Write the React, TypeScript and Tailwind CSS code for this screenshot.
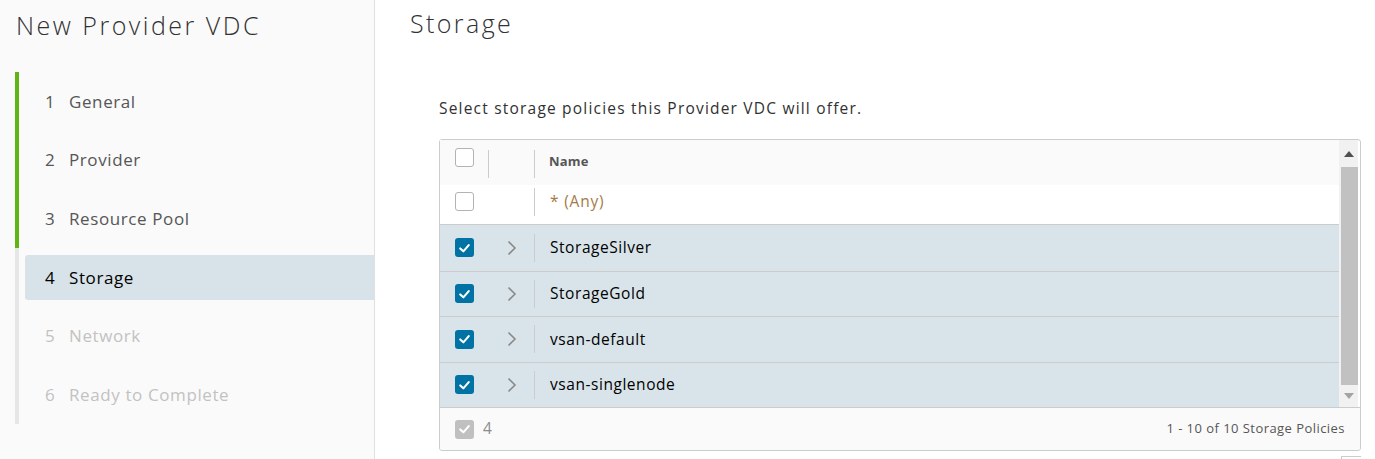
import React from "react";

const steps = [
  { n: 1, label: "General", state: "done" },
  { n: 2, label: "Provider", state: "done" },
  { n: 3, label: "Resource Pool", state: "done" },
  { n: 4, label: "Storage", state: "active" },
  { n: 5, label: "Network", state: "todo" },
  { n: 6, label: "Ready to Complete", state: "todo" },
];

const rows = ["StorageSilver", "StorageGold", "vsan-default", "vsan-singlenode"];

function Check() {
  return (
    <svg viewBox="0 0 20 20" width="20" height="20">
      <polyline points="5.5,10.5 8.8,13.5 14.5,7" fill="none" stroke="white" strokeWidth="2.2" strokeLinecap="round" strokeLinejoin="round" />
    </svg>
  );
}

function EmptyBox() {
  return <div className="w-[19px] h-[19px] rounded-[3px] border border-[#b3b3b3] bg-white" />;
}

function BlueBox() {
  return (
    <div className="w-[19px] h-[19px] rounded-[3px] bg-[#0072a3] flex items-center justify-center">
      <Check />
    </div>
  );
}

function Chevron() {
  return (
    <svg width="10" height="16" viewBox="0 0 10 16">
      <polyline points="1.5,1.5 8,8 1.5,14.5" fill="none" stroke="#8a8a8a" strokeWidth="1.6" />
    </svg>
  );
}

export default function App() {
  return (
    <div className="flex w-[1375px] h-[459px] overflow-hidden bg-white text-[#313131]" style={{ fontFamily: "'Open Sans', Lato, sans-serif" }}>
      {/* Sidebar */}
      <div className="w-[375px] shrink-0 bg-[#fafafa] border-r border-[#e0e0e0] flex flex-col">
        <div className="shrink-0 pl-[16px] pt-[7px] h-[72px] text-[25px] leading-[36px] font-light text-[#313131] tracking-[2.5px]">New Provider VDC</div>
        <div className="flex flex-col shrink-0">
          {steps.map((s) => (
            <div
              key={s.n}
              className={`shrink-0 ml-[15px] h-[58.7px] border-l-[4px] pl-[6px] flex items-center ${s.state === "done" ? "border-[#60b515]" : "border-[#e6e6e6]"}`}
            >
              <div
                className={`w-full h-[45px] flex items-center pl-[20px] text-[17px] tracking-[0.6px] rounded-l-[3px] ${
                  s.state === "active" ? "bg-[#d8e3e9] text-[#000000]" : s.state === "done" ? "text-[#565656]" : "text-[#c2c2c2]"
                }`}
              >
                <span className="w-[24px]">{s.n}</span>
                <span>{s.label}</span>
              </div>
            </div>
          ))}
        </div>
      </div>

      {/* Main */}
      <div className="flex-1 flex flex-col">
        <div className="shrink-0 pl-[35px] pt-[5px] h-[96px] text-[25px] leading-[36px] font-light text-[#313131] tracking-[2.4px]">Storage</div>
        <div className="shrink-0 pl-[64px] pr-[14px]">
          <div className="text-[15.5px] leading-[24px] text-[#313131] h-[43px] tracking-[1.2px]">Select storage policies this Provider VDC will offer.</div>
          <div className="border border-[#cccccc] rounded-[3px] w-[922px] flex flex-col">
            <div className="flex">
              <div className="flex-1 flex flex-col">
                {/* header */}
                <div className="h-[45px] bg-[#fafafa] flex">
                  <div className="w-[48px] pl-[15px] pt-[8px]">
                    <EmptyBox />
                  </div>
                  <div className="w-[46px] border-l border-[#cccccc] h-[28px] mt-[10px]" />
                  <div className="flex-1 flex items-center relative">
                    <div className="absolute left-0 top-[10px] h-[28px] border-l border-[#cccccc]" />
                    <span className="pl-[15px] text-[13px] font-bold text-[#565656] pb-[2px] tracking-[0.2px]">Name</span>
                  </div>
                </div>
                {/* any row */}
                <div className="h-[40px] bg-white flex items-center border-b border-[#cccccc] pb-[6px]">
                  <div className="w-[48px] pl-[15px]">
                    <EmptyBox />
                  </div>
                  <div className="w-[46px]" />
                  <div className="flex-1 h-[28px] border-l border-[#cccccc] flex items-center pl-[15px] text-[15.5px] tracking-[0.8px] text-[#a57b47]">* (Any)</div>
                </div>
                {rows.map((r, i) => (
                  <div key={r} className={`h-[45.5px] bg-[#d9e4ea] flex items-center ${i > 0 ? "border-t border-[#cccccc]" : ""}`}>
                    <div className="w-[48px] pl-[15px]">
                      <BlueBox />
                    </div>
                    <div className="w-[46px] flex justify-center pl-[2px]">
                      <Chevron />
                    </div>
                    <div className="flex-1 h-[28px] border-l border-[#cccccc] flex items-center pl-[15px] text-[15.5px] tracking-[0.55px] text-[#000000]">{r}</div>
                  </div>
                ))}
              </div>
              {/* scrollbar */}
              <div className="w-[19px] mr-[2px] bg-[#f1f1f1] flex flex-col items-center">
                <div className="h-[27px] flex items-center justify-center">
                  <svg width="10" height="6" viewBox="0 0 10 6"><polygon points="0,6 5,0 10,6" fill="#505050" /></svg>
                </div>
                <div className="w-[17px] ml-[2px] h-[218px] bg-[#c1c1c1]" />
                <div className="flex-1 flex items-center justify-center">
                  <svg width="10" height="6" viewBox="0 0 10 6"><polygon points="0,0 10,0 5,6" fill="#a3a3a3" /></svg>
                </div>
              </div>
            </div>
            {/* footer */}
            <div className="h-[43px] border-t border-[#cccccc] bg-[#fafafa] flex items-center pl-[15px] pr-[15px] rounded-b-[3px]">
              <div className="w-[19px] h-[19px] rounded-[3px] bg-[#c0c0c0] flex items-center justify-center">
                <Check />
              </div>
              <span className="ml-[9px] text-[15.5px] text-[#8c8c8c]">4</span>
              <span className="ml-auto text-[13px] tracking-[0.45px] text-[#565656]">1 - 10 of 10 Storage Policies</span>
            </div>
          </div>
          <div className="flex justify-end mt-[5px] w-[922px]">
            <div className="w-[20px] h-[10px] border-t border-l border-[#cccccc]" />
          </div>
        </div>
      </div>
    </div>
  );
}
